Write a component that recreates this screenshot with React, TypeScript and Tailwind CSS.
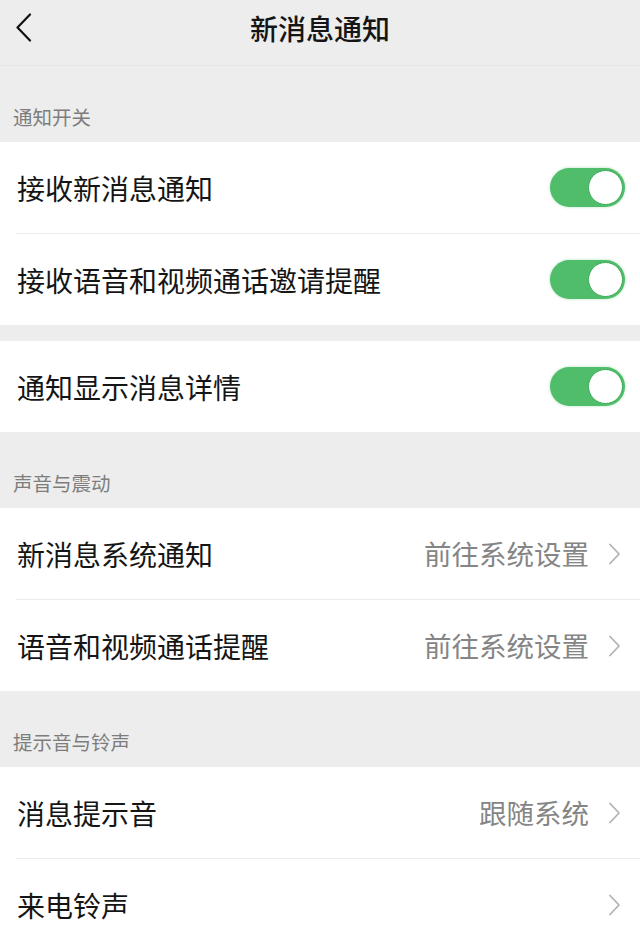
import React from 'react';

const FONT = '"Noto Sans CJK SC", "Noto Sans", sans-serif';

function BackIcon() {
  return (
    <svg width="17" height="29" viewBox="0 0 17 29" fill="none">
      <path d="M15 1.5L2.5 14.5L15 27.5" stroke="#111" strokeWidth="2.2" strokeLinecap="round" strokeLinejoin="round" />
    </svg>
  );
}

function Chevron() {
  return (
    <svg width="13" height="22" viewBox="0 0 13 22" fill="none">
      <path d="M2 1.5L11 11L2 20.5" stroke="#b3b3b3" strokeWidth="1.8" strokeLinecap="round" strokeLinejoin="round" />
    </svg>
  );
}

function Toggle() {
  return (
    <div className="w-[75px] h-[39px] rounded-full bg-[#4fbd6a] flex items-center justify-end pr-[2px] shadow-[0_0_3px_rgba(79,189,106,0.45)]">
      <div className="w-[35px] h-[35px] rounded-full bg-white border border-[#3fa95a]" />
    </div>
  );
}

type Row = { label: string; value?: string; toggle?: boolean; arrow?: boolean };

function SettingRow({ row }: { row: Row }) {
  return (
    <div className="h-[91px] flex items-center pl-[17px] pr-[15px]">
      <span className="flex-1 text-[28px] leading-none text-[#151515]">{row.label}</span>
      {row.toggle && <Toggle />}
      {row.arrow && (
        <div className="flex items-center gap-[19px] pr-[4px]">
          {row.value && <span className="text-[27.5px] leading-none text-[#858585]">{row.value}</span>}
          <Chevron />
        </div>
      )}
    </div>
  );
}

function Group({ rows }: { rows: Row[] }) {
  return (
    <div className="bg-white">
      {rows.map((row, i) => (
        <div key={row.label}>
          {i > 0 && <div className="ml-4 h-px bg-[#ebebeb]" />}
          <SettingRow row={row} />
        </div>
      ))}
    </div>
  );
}

function SectionLabel({ title }: { title: string }) {
  return (
    <div className="h-[76px] flex items-end pl-[13px] pb-[13px]">
      <span className="text-[19.5px] leading-[24px] text-[#7d7d7d]">{title}</span>
    </div>
  );
}

export default function App() {
  return (
    <div className="w-[640px] h-[943px] overflow-hidden bg-[#ededed]" style={{ fontFamily: FONT }}>
      {/* nav bar */}
      <div className="h-[66px] grid grid-cols-[1fr_auto_1fr] items-center border-b border-[#e6e6e6]">
        <div className="pl-[15px] pb-[10px] flex items-center">
          <BackIcon />
        </div>
        <h1 className="text-[28px] leading-none font-medium text-[#151515] pb-[10px]">新消息通知</h1>
        <div />
      </div>

      <SectionLabel title="通知开关" />
      <Group
        rows={[
          { label: '接收新消息通知', toggle: true },
          { label: '接收语音和视频通话邀请提醒', toggle: true },
        ]}
      />
      <div className="h-[16px]" />
      <Group rows={[{ label: '通知显示消息详情', toggle: true }]} />

      <SectionLabel title="声音与震动" />
      <Group
        rows={[
          { label: '新消息系统通知', value: '前往系统设置', arrow: true },
          { label: '语音和视频通话提醒', value: '前往系统设置', arrow: true },
        ]}
      />

      <SectionLabel title="提示音与铃声" />
      <Group
        rows={[
          { label: '消息提示音', value: '跟随系统', arrow: true },
          { label: '来电铃声', arrow: true },
        ]}
      />
    </div>
  );
}
